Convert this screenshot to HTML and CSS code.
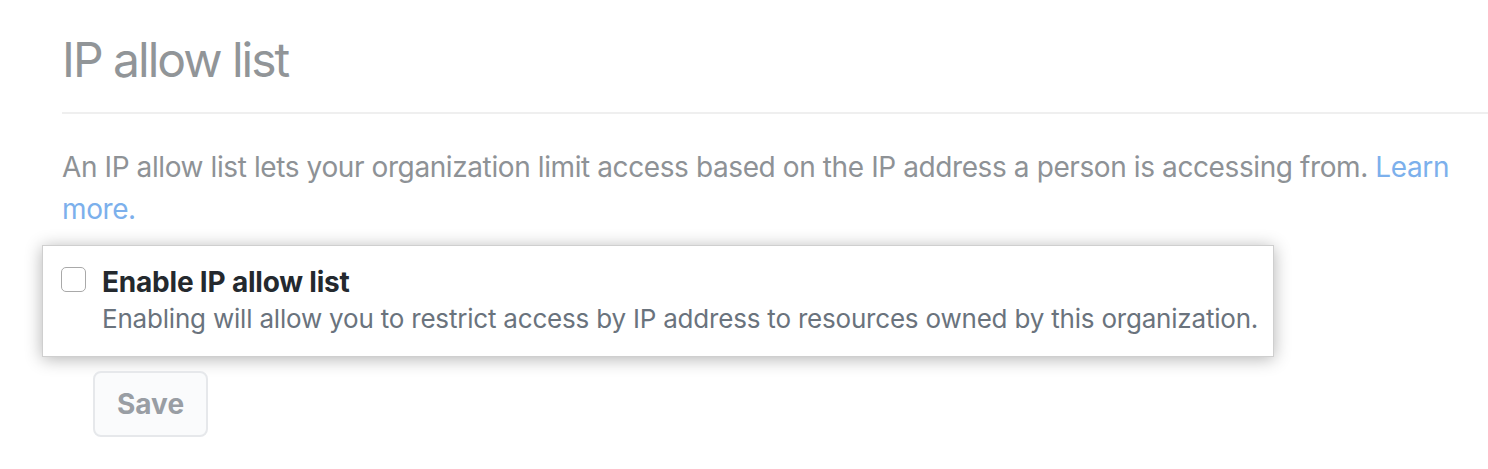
FILE: index.html
```html
<!DOCTYPE html>
<html lang="en">

<head>
    <meta charset="UTF-8">
    <meta name="viewport" content="width=device-width, initial-scale=1.0">
    <title>IP allow list</title>
    <link rel="stylesheet" href="styles.css">
</head>

<body>

    <div class="settings">
        <!-- Header -->
        <h2 class="settings-title">IP allow list</h2>

        <p class="settings-intro">
            An IP allow list lets your organization limit access based on the IP address a person is accessing from.
            <a href="#">Learn more.</a>
        </p>

        <!-- Highlighted option -->
        <div class="option-card">
            <span class="option-check"></span>
            <div class="option-body">
                <div class="option-label">Enable IP allow list</div>
                <div class="option-note">Enabling will allow you to restrict access by IP address to resources owned by this organization.</div>
            </div>
        </div>

        <button class="btn-save">Save</button>
    </div>

</body>

</html>
```

FILE: styles.css
```css
body {
    margin: 0;
    background: #ffffff;
    font-family: Inter, "Noto Sans", sans-serif;
}

.settings {
    padding: 30px 0 0 62px;
}

/* Header */
.settings-title {
    margin: 0;
    font-size: 48px;
    font-weight: 400;
    line-height: 60px;
    letter-spacing: -2px;
    color: #919598;
    padding-bottom: 22px;
    border-bottom: 2px solid #efefef;
}

.settings-intro {
    margin: 32px 0 0;
    font-size: 28px;
    line-height: 42px;
    letter-spacing: -0.4px;
    color: #8e9296;
    padding-right: 20px;
}

.settings-intro a {
    color: #7cb0ec;
    text-decoration: none;
}

/* Highlighted option */
.option-card {
    display: flex;
    align-items: flex-start;
    width: 1194px;
    margin: 15px 0 0 -20px;
    padding: 17px 18px 19px;
    background: #ffffff;
    border: 1px solid #cfcfcf;
    box-shadow: 0 2px 16px rgba(0, 0, 0, 0.3);
}

.option-check {
    flex: none;
    width: 23px;
    height: 23px;
    margin-top: 4px;
    border: 1px solid #a9a9a9;
    border-radius: 5px;
    background: #ffffff;
}

.option-body {
    margin-left: 16px;
}

.option-label {
    font-size: 28px;
    font-weight: 700;
    line-height: 38px;
    letter-spacing: -0.2px;
    color: #24292e;
}

.option-note {
    font-size: 26px;
    line-height: 36px;
    letter-spacing: -0.2px;
    white-space: nowrap;
    color: #6a737d;
}

.btn-save {
    display: block;
    margin: 14px 0 0 31px;
    height: 66px;
    padding: 0 22px;
    font-family: inherit;
    font-size: 28px;
    font-weight: 700;
    color: #999ea4;
    background: #fafbfc;
    border: 2px solid #e6e8eb;
    border-radius: 8px;
}
```
